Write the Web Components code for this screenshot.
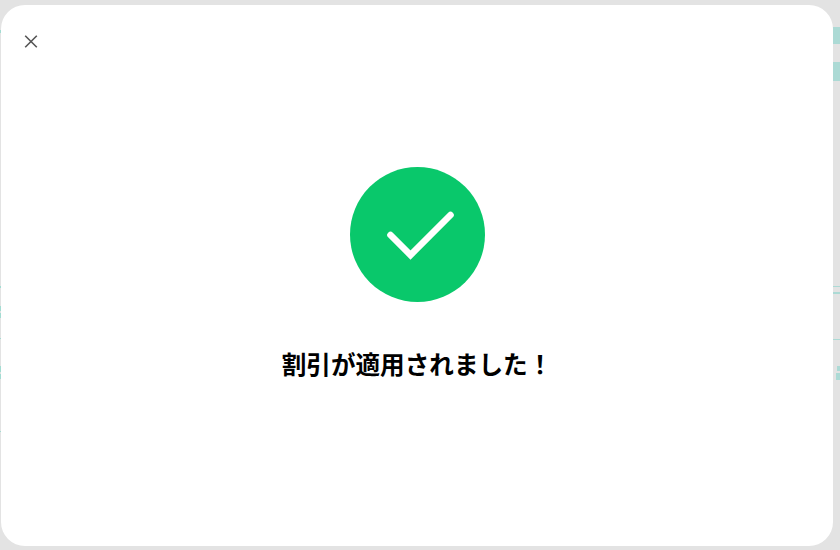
<!DOCTYPE html>
<html lang="ja">
<head>
<meta charset="utf-8">
<title>割引</title>
<style>
html,body{margin:0;padding:0;background:#e3e3e3;}
</style>
</head>
<body>
<template id="t-backdrop">
<style>
:host{display:block;box-sizing:border-box;width:840px;height:550px;padding:5px 7px 4px 1px;background-color:#e3e3e3;
background-repeat:no-repeat;
--t:linear-gradient(#acdad5,#acdad5);
--l:linear-gradient(#a3dcd2,#a3dcd2);
background-image:
var(--t),var(--t),var(--t),var(--t),var(--t),var(--t),var(--t),
var(--l),var(--l),var(--l),var(--l),var(--l),var(--l),var(--l),var(--l);
background-size:7px 17px,7px 19px,7px 1px,7px 2px,7px 1px,3px 5px,4px 7px,
1px 2px,1px 5px,1px 5px,1px 1px,1px 6px,1px 5px,1px 1px,1px 3px;
background-position:833px 27px,833px 62px,833px 286px,833px 292px,833px 339px,837px 366px,836px 373px,
0 286px,0 306px,0 313px,0 338px,0 366px,0 374px,0 431px,0 30px;}
</style><slot></slot>
</template>
<template id="t-modal">
<style>
:host{display:flex;flex-direction:column;height:100%;background:#fff;border-radius:24px;overflow:hidden;
font-family:"Noto Sans CJK JP","Liberation Sans",sans-serif;color:#000;}
.head{display:flex;padding:24px 18px 0;}
.body{flex:1;display:flex;flex-direction:column;align-items:center;padding-top:114px;gap:43px;}
</style>
<div class="head"><slot name="head"></slot></div>
<div class="body"><slot></slot></div>
</template>
<template id="t-close">
<style>
:host{display:block;width:24px;height:24px;cursor:pointer;}
svg{display:block;}
</style>
<svg width="24" height="24" viewBox="0 0 24 24" fill="none" stroke="#555" stroke-width="1.6"><path d="M6.2 6.7 17.8 18.3M17.8 6.7 6.2 18.3"/></svg>
</template>
<template id="t-check">
<style>
:host{display:block;width:135px;height:135px;}
svg{display:block;}
</style>
<svg width="135" height="135" viewBox="0 0 135 135"><circle cx="67.5" cy="67.5" r="67.5" fill="#09c86b"/><path d="M40.5 68 60.5 88 100.5 48" fill="none" stroke="#fff" stroke-width="6.6" stroke-linecap="round" stroke-linejoin="miter"/></svg>
</template>
<template id="t-title">
<style>
:host{display:block;box-sizing:border-box;font-size:24.6px;font-weight:700;line-height:36px;white-space:nowrap;}
</style><slot></slot>
</template>

<x-backdrop>
<x-modal>
<x-close slot="head" aria-label="閉じる"></x-close>
<x-check></x-check>
<x-title>割引が適用されました！</x-title>
</x-modal>
</x-backdrop>

<script>
for (const [name,id] of [["x-backdrop","t-backdrop"],["x-modal","t-modal"],["x-close","t-close"],["x-check","t-check"],["x-title","t-title"]]) {
  customElements.define(name, class extends HTMLElement {
    constructor(){super();this.attachShadow({mode:"open"}).appendChild(document.getElementById(id).content.cloneNode(true));}
  });
}
</script>
</body>
</html>
